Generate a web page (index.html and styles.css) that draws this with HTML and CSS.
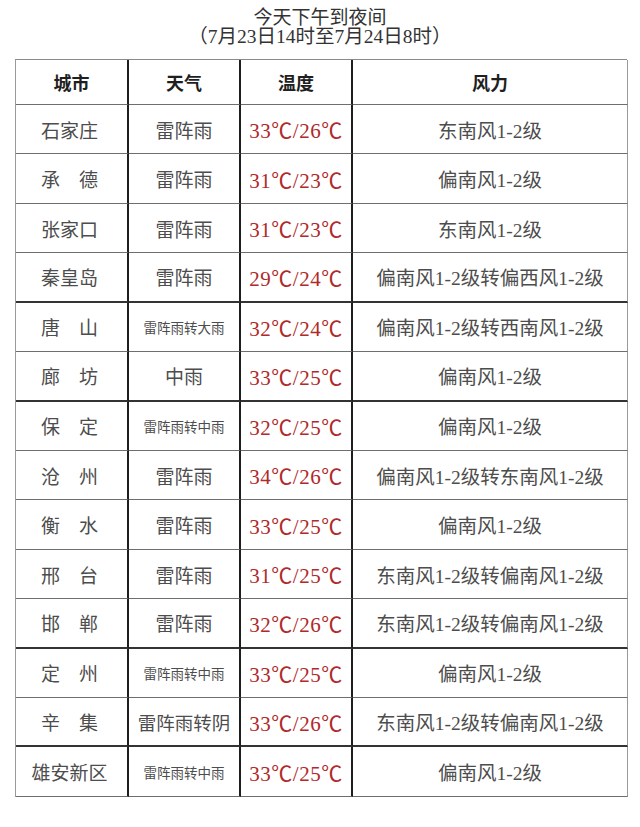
FILE: index.html
```html
<!DOCTYPE html>
<html lang="zh">
<head>
<meta charset="utf-8">
<title>今天下午到夜间</title>
<link rel="stylesheet" href="styles.css">
</head>
<body>
<div class="page">
  <div class="title">
    <div class="title-line">今天下午到夜间</div>
    <div class="title-line sub">（7月23日14时至7月24日8时）</div>
  </div>
  <div class="grid">
    <div class="cell head">城市</div>
    <div class="cell head">天气</div>
    <div class="cell head">温度</div>
    <div class="cell head last">风力</div>

    <div class="cell city">石家庄</div><div class="cell wx">雷阵雨</div><div class="cell temp">33℃/26℃</div><div class="cell wind last">东南风1-2级</div>
    <div class="cell city">承　德</div><div class="cell wx">雷阵雨</div><div class="cell temp">31℃/23℃</div><div class="cell wind last">偏南风1-2级</div>
    <div class="cell city">张家口</div><div class="cell wx">雷阵雨</div><div class="cell temp">31℃/23℃</div><div class="cell wind last">东南风1-2级</div>
    <div class="cell city dark">秦皇岛</div><div class="cell wx dark">雷阵雨</div><div class="cell temp dark">29℃/24℃</div><div class="cell wind last dark">偏南风1-2级转偏西风1-2级</div>
    <div class="cell city">唐　山</div><div class="cell wx small">雷阵雨转大雨</div><div class="cell temp">32℃/24℃</div><div class="cell wind last">偏南风1-2级转西南风1-2级</div>
    <div class="cell city dark">廊　坊</div><div class="cell wx dark">中雨</div><div class="cell temp dark">33℃/25℃</div><div class="cell wind last dark">偏南风1-2级</div>
    <div class="cell city">保　定</div><div class="cell wx small">雷阵雨转中雨</div><div class="cell temp">32℃/25℃</div><div class="cell wind last">偏南风1-2级</div>
    <div class="cell city">沧　州</div><div class="cell wx">雷阵雨</div><div class="cell temp">34℃/26℃</div><div class="cell wind last">偏南风1-2级转东南风1-2级</div>
    <div class="cell city">衡　水</div><div class="cell wx">雷阵雨</div><div class="cell temp">33℃/25℃</div><div class="cell wind last">偏南风1-2级</div>
    <div class="cell city">邢　台</div><div class="cell wx">雷阵雨</div><div class="cell temp">31℃/25℃</div><div class="cell wind last">东南风1-2级转偏南风1-2级</div>
    <div class="cell city dark">邯　郸</div><div class="cell wx dark">雷阵雨</div><div class="cell temp dark">32℃/26℃</div><div class="cell wind last dark">东南风1-2级转偏南风1-2级</div>
    <div class="cell city">定　州</div><div class="cell wx small">雷阵雨转中雨</div><div class="cell temp">33℃/25℃</div><div class="cell wind last">偏南风1-2级</div>
    <div class="cell city dark">辛　集</div><div class="cell wx mid dark">雷阵雨转阴</div><div class="cell temp dark">33℃/26℃</div><div class="cell wind last dark">东南风1-2级转偏南风1-2级</div>
    <div class="cell city">雄安新区</div><div class="cell wx small">雷阵雨转中雨</div><div class="cell temp">33℃/25℃</div><div class="cell wind last">偏南风1-2级</div>
  </div>
</div>
</body>
</html>
```
FILE: styles.css
```css
html, body {
  margin: 0;
  padding: 0;
  background: #ffffff;
}

.page {
  width: 640px;
  font-family: "Liberation Serif", "Noto Sans CJK SC", serif;
  color: #4a4a4a;
}

.title {
  padding-top: 8px;
  height: 59px;
  box-sizing: border-box;
  text-align: center;
  color: #333333;
  font-size: 19px;
  line-height: 19px;
}

.title-line.sub {
  font-size: 19.5px;
}

.grid {
  margin-left: 15px;
  width: 612px;
  display: grid;
  grid-template-columns: 113px 112px 112px 275px;
  grid-template-rows: 45px repeat(14, 49.43px);
  border-top: 1px solid #8a8a8a;
  border-left: 1px solid #9a9a9a;
  box-sizing: border-box;
}

.cell {
  display: flex;
  align-items: center;
  justify-content: center;
  border-right: 2px solid #1e1e1e;
  border-bottom: 1px solid #6e6e6e;
  box-sizing: border-box;
  font-size: 19px;
  white-space: nowrap;
}

.cell.dark {
  border-bottom: 2px solid #333333;
}

.cell.last {
  border-right: 1px solid #9a9a9a;
}

.head {
  color: #1f1f1f;
  font-weight: bold;
  font-size: 18px;
}

.city {
  color: #4d4d4d;
  padding-right: 4px;
}

.wx {
  color: #4d4d4d;
}

.wx.small {
  font-size: 13.5px;
}

.wx.mid {
  font-size: 18.5px;
}

.temp {
  color: #b02a2a;
  font-size: 21px;
  letter-spacing: 0.5px;
}

.wind {
  color: #4d4d4d;
  font-size: 19.5px;
}
```
